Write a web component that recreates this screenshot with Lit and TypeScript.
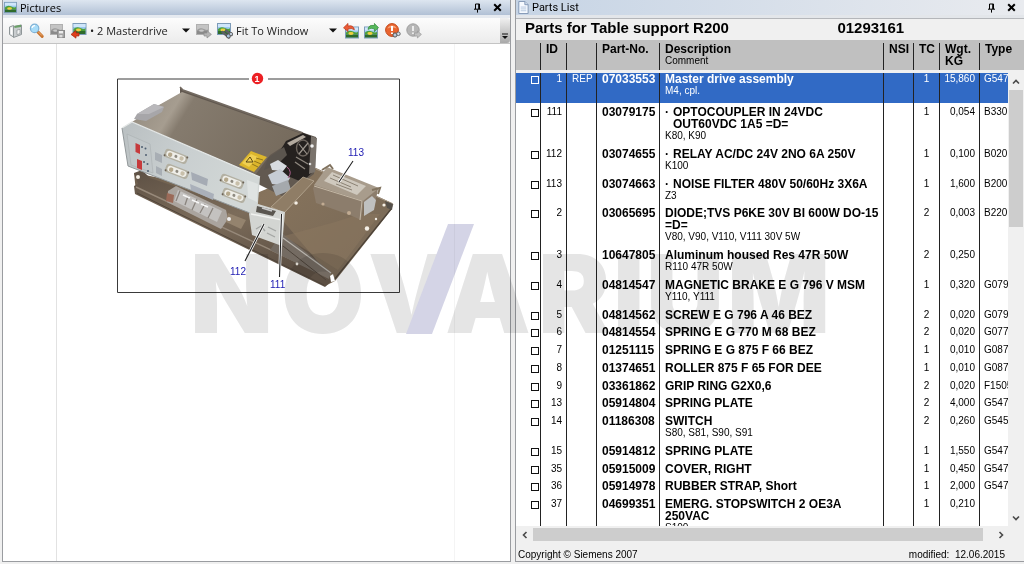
import { LitElement, html, css, svg, nothing } from "lit";
import { customElement, state } from "lit/decorators.js";
import { classMap } from "lit/directives/class-map.js";

interface Part {
  id: string;
  no: string;
  lines: string[];
  sub?: boolean;
  comment?: string;
  rep?: string;
  tc: string;
  kg: string;
  type: string;
}

const PARTS: Part[] = [
  { id: "1", rep: "REP", no: "07033553", lines: ["Master drive assembly"], comment: "M4, cpl.", tc: "1", kg: "15,860", type: "G547" },
  { id: "111", no: "03079175", sub: true, lines: ["OPTOCOUPLER IN 24VDC", "OUT60VDC 1A5 =D="], comment: "K80, K90", tc: "1", kg: "0,054", type: "B330" },
  { id: "112", no: "03074655", sub: true, lines: ["RELAY AC/DC 24V 2NO 6A 250V"], comment: "K100", tc: "1", kg: "0,100", type: "B020" },
  { id: "113", no: "03074663", sub: true, lines: ["NOISE FILTER 480V 50/60Hz 3X6A"], comment: "Z3", tc: "1", kg: "1,600", type: "B200" },
  { id: "2", no: "03065695", lines: ["DIODE;TVS P6KE 30V BI 600W DO-15", "=D="], comment: "V80, V90, V110, V111 30V 5W", tc: "2", kg: "0,003", type: "B220" },
  { id: "3", no: "10647805", lines: ["Aluminum housed Res 47R 50W"], comment: "R110 47R 50W", tc: "2", kg: "0,250", type: "" },
  { id: "4", no: "04814547", lines: ["MAGNETIC BRAKE E G 796 V MSM"], comment: "Y110, Y111", tc: "1", kg: "0,320", type: "G079" },
  { id: "5", no: "04814562", lines: ["SCREW E G 796 A 46 BEZ"], tc: "2", kg: "0,020", type: "G079" },
  { id: "6", no: "04814554", lines: ["SPRING E G 770 M 68 BEZ"], tc: "2", kg: "0,020", type: "G077" },
  { id: "7", no: "01251115", lines: ["SPRING E G 875 F 66 BEZ"], tc: "1", kg: "0,010", type: "G087" },
  { id: "8", no: "01374651", lines: ["ROLLER 875 F 65 FOR DEE"], tc: "1", kg: "0,010", type: "G087" },
  { id: "9", no: "03361862", lines: ["GRIP RING G2X0,6"], tc: "2", kg: "0,020", type: "F1505" },
  { id: "13", no: "05914804", lines: ["SPRING PLATE"], tc: "2", kg: "4,000", type: "G547" },
  { id: "14", no: "01186308", lines: ["SWITCH"], comment: "S80, S81, S90, S91", tc: "2", kg: "0,260", type: "G545" },
  { id: "15", no: "05914812", lines: ["SPRING PLATE"], tc: "1", kg: "1,550", type: "G547" },
  { id: "35", no: "05915009", lines: ["COVER, RIGHT"], tc: "1", kg: "0,450", type: "G547" },
  { id: "36", no: "05914978", lines: ["RUBBER STRAP, Short"], tc: "1", kg: "2,000", type: "G547" },
  { id: "37", no: "04699351", lines: ["EMERG. STOPSWITCH 2 OE3A", "250VAC"], comment: "S100", tc: "1", kg: "0,210", type: "" },
];

const pictureGlyph = svg`
  <rect x="0.5" y="1.5" width="13" height="11" fill="#9cc9f0" stroke="#7d9bb8"/>
  <rect x="1" y="2" width="12" height="3" fill="#cfe6fa"/>
  <path d="M1 7 Q4 4 8 6 T13 6 V9 H1Z" fill="#4da03c"/>
  <path d="M1 9 H13 V12 H1Z" fill="#2e6b2a"/>
  <ellipse cx="6" cy="8" rx="2.6" ry="1.4" fill="#f0d040"/>`;

const greyPicture = svg`
  <rect x="0.5" y="1.5" width="12" height="10" fill="#c4c4c4" stroke="#b0b0b0"/>
  <path d="M1 7 Q4 4 8 6 T12 6 V8 H1Z" fill="#9a9a9a"/>
  <path d="M1 8 H12 V11 H1Z" fill="#8a8a8a"/>
  <ellipse cx="5.5" cy="7.6" rx="2.4" ry="1.2" fill="#c9c9c9"/>`;

const ICONS = {
  book: svg`
    <path d="M1.5 4 L5.5 2.5 V14 L1.5 11.5Z" fill="#e9ebec" stroke="#8f9698"/>
    <path d="M5.5 3.5 L13.5 2 V11.5 L5.5 14.5Z" fill="#c9cdcf" stroke="#8f9698"/>
    <path d="M6.5 3 L13 1.8 V4 L6.5 5Z" fill="#6aa067"/>
    <path d="M9 7 L12 6.4 V10.6 L9 11.6Z" fill="#f3f4f4" stroke="#858b8d" stroke-width="0.6"/>
    <path d="M3 5 L4.2 4.5 V11.6 L3 11Z" fill="#fff"/>`,
  lens: svg`
    <path d="M8.6 8.6 L13.2 13.4" stroke="#c8742f" stroke-width="3" stroke-linecap="round"/>
    <path d="M9 8.6 L13 12.6" stroke="#f2b277" stroke-width="1"/>
    <circle cx="5.6" cy="5.4" r="4.2" fill="#a8dcf8" stroke="#7fb2d6" stroke-width="1.2"/>
    <path d="M3 5 A3 3 0 0 1 6 2.6" stroke="#fff" stroke-width="1.2" fill="none"/>`,
  saveOff: svg`${greyPicture}
    <rect x="7.5" y="7.5" width="7" height="7" fill="#a4a4a4" stroke="#8c8c8c"/>
    <rect x="9" y="8" width="4" height="2.4" fill="#ececec"/>
    <rect x="9.4" y="12" width="3" height="2.4" fill="#ddd"/>`,
  back: svg`<g transform="translate(1.5 -1)">${pictureGlyph}</g>
    <path d="M0 11.4 L5 7.6 V10 H8 V13 H5 V15.2Z" fill="#e0401c" stroke="#a82a10" stroke-width="0.7"/>`,
  forwardOff: svg`${greyPicture}
    <path d="M15.4 11.4 L11 7.8 V10 H8 V13 H11 V15Z" fill="#b4b4b4" stroke="#8e8e8e" stroke-width="0.7"/>`,
  find: svg`<g transform="translate(0 -1)">${pictureGlyph}</g>
    <path d="M5.5 9 L12 14.5 M9 7.5 L14.5 12" stroke="#5b5f64" stroke-width="2.4" stroke-linecap="round"/>
    <circle cx="11.4" cy="13" r="2" fill="#a8c4e0" stroke="#555"/>
    <circle cx="14" cy="11" r="1.6" fill="#c9d8e8" stroke="#666"/>`,
  undo: svg`<g transform="translate(2 2.5)">${pictureGlyph}</g>
    <path d="M0.5 4.8 L5 0.4 V3 Q10.6 1.6 11.4 6.8 Q8.6 4.6 5 6 V8.6Z" fill="#ea5a36" stroke="#b83818" stroke-width="0.7"/>`,
  redo: svg`<g transform="translate(0 2.5)">${pictureGlyph}</g>
    <path d="M14.5 4.8 L10.4 0.4 V2.6 Q4.6 1.4 4 6.4 Q7 4.4 10.4 5.8 V8.6Z" fill="#56b85a" stroke="#2f8a36" stroke-width="0.7"/>`,
  alertFind: svg`
    <circle cx="7" cy="7" r="6.4" fill="#e9642f" stroke="#c24a1c"/>
    <path d="M2.4 5.6 A5 5 0 0 1 11.6 5.6 Q7 3.6 2.4 5.6Z" fill="#f6a67c"/>
    <path d="M7 3 V8 M7 9.6 V11" stroke="#fff" stroke-width="2"/>
    <circle cx="10" cy="12" r="2.1" fill="#b9c9da" stroke="#555"/>
    <circle cx="13.4" cy="10.8" r="1.8" fill="#d4dee8" stroke="#666"/>`,
  alertOff: svg`
    <circle cx="7" cy="7" r="6.2" fill="#b6b6b6" stroke="#a0a0a0"/>
    <path d="M7 3 V8 M7 9.6 V11" stroke="#ececec" stroke-width="2"/>
    <path d="M15.4 11.4 L11.4 8 V10 H8.4 V13 H11.4 V15Z" fill="#c2c2c2" stroke="#999" stroke-width="0.7"/>`,
};

const caret = html`<svg class="caret" viewBox="0 0 8 5" width="8" height="5"><path d="M0 0.5 H8 L4 4.5Z" fill="#111"/></svg>`;

const chevron = (d: string) =>
  html`<svg viewBox="0 0 8 8" width="8" height="8"><path d=${d} fill="none" stroke="#4a4a4a" stroke-width="1.6"/></svg>`;

const panelTools = html`
  <button class="tool" aria-label="Auto hide">
    <svg viewBox="0 0 9 10" width="9" height="10">
      <path d="M2.5 6 V1 H6.5 V6 M1 6.2 H8 M4.5 6.5 V9.6" fill="none" stroke="#000"/><path d="M5.7 1 V6" stroke="#000"/>
    </svg>
  </button>
  <button class="tool" aria-label="Close">
    <svg viewBox="0 0 9 9" width="9" height="9"><path d="M1.2 1.2 L7.8 7.8 M7.8 1.2 L1.2 7.8" stroke="#000" stroke-width="2"/></svg>
  </button>`;

@customElement("assembly-drawing")
export class AssemblyDrawing extends LitElement {
  static styles = css`
    :host { display: block; }
    .drawing { display: block; width: 100%; height: auto; }
    .mark { font: 10px "Liberation Sans", sans-serif; fill: #2320b4; }
    .badge { font: bold 9px "Liberation Sans", sans-serif; fill: #fff; }
  `;

  render() {
    return html`<svg class="drawing" viewBox="116 72 285 222" role="img" aria-label="Master drive assembly">
      <defs>
        <linearGradient id="lid" x1="0" y1="0" x2="1" y2="0.3">
          <stop offset="0" stop-color="#8f877b"/><stop offset="0.28" stop-color="#a69d90"/>
          <stop offset="0.36" stop-color="#857b6e"/><stop offset="1" stop-color="#776c5e"/>
        </linearGradient>
        <linearGradient id="front" x1="0" y1="0" x2="1" y2="0.4">
          <stop offset="0" stop-color="#b9bfc1"/><stop offset="0.5" stop-color="#c9cfd0"/><stop offset="1" stop-color="#d2d7d6"/>
        </linearGradient>
        <linearGradient id="plate" x1="0" y1="0" x2="1" y2="0.5">
          <stop offset="0" stop-color="#6c5d4c"/><stop offset="0.5" stop-color="#86735c"/><stop offset="1" stop-color="#7a6a57"/>
        </linearGradient>
        <linearGradient id="rail" x1="0" y1="0" x2="0.4" y2="1">
          <stop offset="0" stop-color="#5d5044"/><stop offset="0.5" stop-color="#7c6c5a"/><stop offset="1" stop-color="#5c4f43"/>
        </linearGradient>
      </defs>

      <path d="M249 79 H117.5 V292.5 H399.5 V79 H268" fill="none" stroke="#3a3a3a"/>

      <path d="M134 173 L150 176 L250 196 L316 168 L392 203 L392 209 L335 281 L325 286 L136 192Z" fill="url(#plate)"/>
      <path d="M134 173 L142 170 L150 178 L258 214 L284 222 L330 276 L334 279 L325 287 L135 194 L134 186 L138 184Z" fill="url(#rail)"/>
      <path d="M136 187 L329 277" stroke="#97897a" stroke-width="1.4"/>
      <path d="M282 233 L331 272 L329 279 L270 250Z" fill="#746b62"/>
      <path d="M283 238 L331 273" stroke="#b9b5ae" stroke-width="1.2"/>
      <path d="M283 246 L326 280" stroke="#4d433a"/>
      <path d="M137 193 L324 285" stroke="#4f443a"/>
      <path d="M334 280 L391 209" stroke="#4c4238" stroke-width="1.2"/>
      <path d="M330 276 L333 274 L335 281 L331 282Z" fill="#fff"/>
      <path d="M316 169 L393 204 L391 209" fill="none" stroke="#a89a88"/>
      <path d="M284 236 L335 222 L360 214 L380 214 L338 270Z" fill="#8b7860" opacity="0.5"/>
      <g fill="#f4efe6"><circle cx="367" cy="228.500" r="2.2"/><circle cx="296" cy="203" r="1.8"/><circle cx="376" cy="219" r="1.2"/><circle cx="384" cy="205" r="1.6"/><circle cx="138" cy="177" r="2"/><circle cx="297" cy="264" r="1.4"/></g>
      <path d="M385 201 L393 204 L392 210 L387 208Z" fill="#55504a"/>

      <path d="M168 191 L176 186 L226 210 L228 219 L221 229 L167 202Z" fill="#aaa49e"/>
      <path d="M167 193 L174 195 L173 203 L166 201Z" fill="#9b6a58"/>
      <path d="M178 190 L222 211 L217 222 L174 201Z" fill="#c4c2c0"/>
      <path d="M180 191 L176 201 M188 196 L185 205 M197 199 L192 210 M205 204 L200 213 M213 208 L208 218" stroke="#8a847e" stroke-width="1.3"/>
      <path d="M183 195 L190 198 M192 200 L199 203 M201 204 L208 207" stroke="#f6f6f6" stroke-width="1.6"/>
      <path d="M228 213 L246 220 L241 229 L226 222Z" fill="#94836e"/>
      <circle cx="229" cy="219" r="2" fill="#eee"/>

      <path d="M180 87 L183 90 L304 133 L316 137 L314 174 L284 197 L254 182 L132 123 L151 110 L180 94Z" fill="#625950"/>
      <path d="M182 92 L302 134 L270 155 L256 174 L132 122 L152 109Z" fill="url(#lid)"/>
      <path d="M180 87 L183 90 L303 133" fill="none" stroke="#746b62" stroke-width="1.6"/>
      <path d="M134 119 L137 114 L154 104 L164 107 L162 112 L146 121Z" fill="#a7a6a9"/>
      <path d="M137 114 L154 104 L164 107 L149 114Z" fill="#b9b8bb"/>

      <path d="M286 141 L303 133 L316 138 L315 170 L302 182 L278 172 L277 156Z" fill="#25211f"/>
      <path d="M287 143 L303 135 L306 137 L290 146Z" fill="#b3aa9f"/>
      <path d="M311 136 L317 138 L315 172 L309 174Z" fill="#7a736c"/>
      <ellipse cx="303" cy="148" rx="6.500" ry="8" fill="none" stroke="#6d655e" stroke-width="1.4"/>
      <path d="M299 144 L307 154 M308 143 L299 154" stroke="#9c958d" stroke-width="1.2"/>
      <path d="M296 157 L308 164 M295 162 L305 169" stroke="#8e877f" stroke-width="1.4"/>
      <circle cx="312" cy="146" r="1.8" fill="#f1f1f1"/><circle cx="310" cy="164" r="1.300" fill="#ddd"/>
      <path d="M268 158 L284 147 L287 155 L278 164 L264 170Z" fill="#5b554e"/>
      <path d="M270 164 L278 160 L287 166 L283 171 L272 170Z" fill="#d7dbe0"/>
      <path d="M268 175 L280 169 L290 178 L285 186 L272 184Z" fill="#c6ccd4"/>
      <path d="M272 186 L288 180 L291 190 L276 196Z" fill="#a5a9ad"/>
      <path d="M287 167 Q293 172 288 178" fill="none" stroke="#b06090"/>

      <path d="M122 128 L132 122 L260 177 L257 215 L250 213 L128 166Z" fill="url(#front)"/>
      <path d="M122 128 L132 122 L260 177" fill="none" stroke="#e4e7e6" stroke-width="1.300"/>
      <path d="M122 128 L128 166 L250 213" fill="none" stroke="#92989a"/>
      <path d="M127 134 L150 144 L153 173 L131 165Z" fill="#c1c7c9" stroke="#adb3b5" stroke-width="0.7"/>
      <path d="M135.500 143 L140 145 V154 L135.500 152Z" fill="#c63a3c"/>
      <path d="M137 159 L142 161 V170 L137 168Z" fill="#c63a3c"/>
      <g fill="#4f5f70"><circle cx="142" cy="147" r="1"/><circle cx="145.500" cy="148.500" r="1"/><circle cx="146" cy="155" r="1"/><circle cx="144" cy="162" r="1"/><circle cx="147.500" cy="164" r="1"/><circle cx="148" cy="171" r="1"/></g>
      <path d="M155 152 L162 155 V163 L155 160Z M156 166 L162 169 V176 L156 173Z" fill="#a8aeb4"/>
      ${[[175, 156], [176, 171], [231, 181], [233, 195]].map(
        ([x, y]) => svg`<g transform=${`translate(${x} ${y}) rotate(21)`}>
          <rect x="-11" y="-4.500" width="24" height="9" rx="3" fill="#b3b0a2"/>
          <rect x="-9" y="-3" width="20" height="6" rx="3" fill="#efeee8"/>
          <circle cx="-5" cy="0.500" r="2.200" fill="#b5a88c"/><circle cx="1" cy="0" r="1.500" fill="#8e8a80"/><circle cx="7" cy="0" r="2.200" fill="#c8bfaa"/>
          <circle cx="-10" cy="3" r="1" fill="#6a6054"/><circle cx="12" cy="-3" r="1" fill="#6a6054"/>
        </g>`
      )}
      <path d="M191 172 L208 179 L207 186 L192 180Z" fill="#a5abb4"/>
      <path d="M190 184 L214 194 L213 200 L191 190Z" fill="#aab0ba"/>
      <path d="M247 180 L258 184 L257 202 L248 198Z" fill="#dfe3e2"/>
      <path d="M239 165 L251 151 L267 157 L254 172Z" fill="#dcb62c"/>
      <path d="M242 163 L251 154 L258 157 L249 167Z" fill="#efcf52"/>
      <path d="M246 162 L250 157 L253 162Z" fill="none" stroke="#4b3a10" stroke-width="0.9"/>
      <path d="M256 158 L263 160 M254 161 L261 164 M252 164 L258 167" stroke="#7c6518" stroke-width="0.8"/>

      <path d="M271 207 L303 177 L314 181 L284 213Z" fill="#8f7d66" stroke="#b8a994" stroke-width="0.8"/>
      <path d="M251 208 L258 204 L285 212 L282 246 L252 235 L249 214Z" fill="#d3d5d2"/>
      <path d="M257 206 L276 211 L273 216 L256 212Z" fill="#5a5650"/>
      <path d="M262 208 L272 211" stroke="#c9c9c9" stroke-width="1.6"/>
      <path d="M251 214 L282 220" stroke="#f1f2f0" stroke-width="1.4"/>
      <path d="M256 229 L261 226 L265 231 M268 227 L276 231 M267 233 L275 237" stroke="#a3a5a3" stroke-width="1.3" fill="none"/>

      <path d="M313 188 L327 168 L378 189 L376 199 L364 202 L361 220 L350 215 L316 203Z" fill="#8c7d6c"/>
      <path d="M314 185 L327 167 L379 188 L363 201Z" fill="#a89c8c"/>
      <path d="M324 181 L332 172 L366 186 L357 195Z" fill="#cfc9be"/>
      <path d="M330 178 L351 187 M333 175 L358 186 M336 184 L352 190" stroke="#8b8274" stroke-width="1"/>
      <path d="M314 186 L362 201 L360 220" fill="none" stroke="#c4b8a6" stroke-width="1"/>
      <path d="M364 202 L372 196 L376 200 L374 210 L364 216Z" fill="#bfc0bf"/>
      <path d="M322 170 L330 165 L333 169 M372 190 L380 188 L378 194" fill="none" stroke="#81735f" stroke-width="2"/>
      <circle cx="349" cy="213" r="2" fill="#c1ab92"/><circle cx="323" cy="204" r="1.600" fill="#c1ab92"/>

      <path d="M353 161 L339 182 M245 261 L264 224 M279.500 277 L281.500 214" stroke="#fff" stroke-width="2.6"/>
      <path d="M353 161 L339 182 M245 261 L264 224 M279.500 277 L281.500 214" stroke="#222" stroke-width="1.1"/>
      <text class="mark" x="348" y="156">113</text>
      <text class="mark" x="230" y="275">112</text>
      <text class="mark" x="270" y="288">111</text>
      <circle cx="257.500" cy="78.500" r="5.700" fill="#ec2024"/>
      <text class="badge" x="257" y="82" text-anchor="middle">1</text>
    </svg>`;
  }
}

@customElement("app-root")
export class AppRoot extends LitElement {
  @state() private selected = "1";

  static styles = css`
    :host {
      display: block;
      position: relative;
      height: 100vh;
      overflow: hidden;
      background: #f0f0f0;
      color: #000;
      font: 10px/12px "Liberation Sans", sans-serif;
    }
    * { box-sizing: border-box; }
    button { display: grid; place-items: center; padding: 0; border: 0; background: none; }
    .window { display: grid; grid-template-columns: 1fr 1fr; height: 100%; gap: 4px; padding: 0 0 2px 2px; }
    .panel { display: flex; flex-direction: column; min-width: 0; min-height: 0; border: solid #9a9ca0; border-width: 0 1px 1px; }
    .parts { border-right-width: 0; }

    .bar {
      display: flex; align-items: center; gap: 3px; flex: none; height: 15px; padding: 0 4px 0 1px;
      background: linear-gradient(#dde6f0, #b1c0d5);
    }
    .parts .bar { background: linear-gradient(90deg, #c6d4e5, #e9ebef); }
    .caption { flex: 1; margin: 0; font: 11px/14px "Open Sans", "Noto Sans", sans-serif; }
    .parts .caption { font: 11px/14px Roboto, sans-serif; }
    .tool { width: 17px; height: 14px; }

    .toolbar {
      display: flex; align-items: center; flex: none; height: 29px; padding-left: 3px;
      border-top: 3px solid #e6eaf0; border-bottom: 1px solid #c4c4c4;
      background: linear-gradient(#fcfcfc, #ececec);
    }
    .icon { width: 20px; height: 20px; margin-right: 1px; }
    .combo { display: flex; align-items: center; margin-right: 2px; }
    .combo.picture { width: 102px; }
    .combo.zoom { width: 103px; }
    .combo select {
      flex: 1; min-width: 0; appearance: none; border: 0; padding: 0; background: none; color: #222;
      font: 11px/16px "Open Sans", "Noto Sans", sans-serif;
    }
    .combo .caret { flex: none; margin-right: 2px; }
    .more {
      width: 10px; height: 25px; margin-left: auto; align-items: end; padding-bottom: 3px;
      background: linear-gradient(#f0f0f0, #a9a9a9); border-radius: 0 3px 3px 0;
    }

    .canvas { flex: 1; min-height: 0; padding: 0 55px 0 53px; background: #fff; }
    .sheet { height: 100%; padding: 28px 53px 0 59px; border: solid #e2e2e2; border-width: 0 1px; border-right-color: #f4f4f4; }

    .heading { display: flex; flex: none; height: 25px; padding: 2px 0 0 9px; border-top: 3px solid #e3e6ea; box-shadow: inset 0 1px #b4b6ba; }
    .heading h1, .heading p { margin: 0; font: bold 15px/16px "Liberation Sans", sans-serif; }
    .heading h1 { flex: 313; }
    .heading p { flex: 187; }

    .list { display: flex; flex: 1; min-height: 0; overflow: hidden; background: #fff; }
    .rows { flex: 1; min-width: 0; }
    table { position: relative; z-index: 1; width: 100%; table-layout: fixed; border-collapse: separate; border-spacing: 0; }
    .c-tick { width: 25px; } .c-id { width: 26px; } .c-rep { width: 30px; } .c-no { width: 63px; }
    .c-nsi { width: 30px; } .c-tc { width: 26px; } .c-kg { width: 40px; } .c-type { width: 28px; }
    th, td { padding: 3px 5px; vertical-align: top; text-align: left; font-weight: normal; white-space: nowrap; }
    th {
      height: 33px; padding-bottom: 0; border-bottom: 3px solid #f0f0f0;
      background: linear-gradient(#222, #222) right bottom / 1px 27px no-repeat padding-box, #c0c0c0 padding-box;
    }
    th:last-child { background: #c0c0c0 padding-box; }
    td { border-right: 1px solid #222; overflow: hidden; }
    td:last-child { border-right: 0; padding: 3px 0 0 4px; }
    tr:nth-child(4n) td { padding-bottom: 2px; }
    .selected td, .selected td:last-child { padding-top: 0; padding-bottom: 6px; background: #316ac5; color: #fff; }
    .strong { display: block; font: bold 12px/12px "Liberation Sans", sans-serif; }
    .sub { padding-left: 8px; }
    .sub:first-child::before { content: "·"; display: inline-block; width: 8px; margin-left: -8px; }
    .end { text-align: right; }
    td.end { padding-right: 4px; padding-left: 0; }
    .mid { text-align: center; }
    .comment { display: block; }
    td.tick { padding-left: 15px; padding-right: 0; }
    .tick input { display: block; appearance: none; width: 8px; height: 8px; margin: 3px 0 0; border: 1px solid #111; background: #fff; }
    .selected .tick input { border-color: #fff; background: none; }

    .scroll-y { display: flex; flex-direction: column; flex: none; width: 16px; background: #f0f0f0; }
    .corner { flex: none; height: 30px; background: #c0c0c0; }
    .track-y { display: grid; grid-template-rows: 17px 137px 1fr 16px; flex: 1; justify-items: center; padding-top: 3px; }
    .thumb { background: #cdcdcd; }
    .track-y .thumb { width: 14px; }
    .scroll-x { display: grid; grid-template-columns: 17px 1fr 36px; flex: none; height: 16px; padding: 2px 5px 1px 0; }
    .status { display: flex; justify-content: space-between; flex: none; height: 19px; padding: 7px 19px 0 2px; }

    .watermark { position: absolute; left: 0; top: 0; width: 100%; height: 100%; pointer-events: none; mix-blend-mode: multiply; z-index: 2; }
    .brand { font: 900 108px Inter, "Open Sans", sans-serif; fill: #e5e5e5; }
  `;

  private icon(name: keyof typeof ICONS, label: string) {
    return html`<button class="icon" aria-label=${label}>
      <svg viewBox="0 0 16 16" width="16" height="16">${ICONS[name]}</svg>
    </button>`;
  }

  private row(p: Part) {
    return html`<tr class=${classMap({ selected: p.id === this.selected })} @click=${() => (this.selected = p.id)}>
      <td class="tick"><input type="checkbox" aria-label=${`Select part ${p.no}`} /></td>
      <td class="end">${p.id}</td>
      <td class="mid">${p.rep ?? nothing}</td>
      <td><span class="strong">${p.no}</span></td>
      <td>
        ${p.lines.map((l) => html`<span class=${classMap({ strong: true, sub: !!p.sub })}>${l}</span>`)}
        ${p.comment ? html`<span class="comment">${p.comment}</span>` : nothing}
      </td>
      <td></td>
      <td class="mid">${p.tc}</td>
      <td class="end">${p.kg}</td>
      <td>${p.type}</td>
    </tr>`;
  }

  render() {
    return html`
      <main class="window">
        <section class="panel">
          <header class="bar">
            <svg viewBox="0 0 14 14" width="13" height="13">${pictureGlyph}</svg>
            <h2 class="caption">Pictures</h2>
            ${panelTools}
          </header>
          <div class="toolbar">
            ${this.icon("book", "Catalog")} ${this.icon("lens", "Zoom")} ${this.icon("saveOff", "Save picture")}
            ${this.icon("back", "Previous picture")}
            <label class="combo picture">
              <select aria-label="Picture"><option>• 2 Masterdrive</option></select>${caret}
            </label>
            ${this.icon("forwardOff", "Next picture")} ${this.icon("find", "Find in picture")}
            <label class="combo zoom">
              <select aria-label="Zoom"><option>Fit To Window</option></select>${caret}
            </label>
            ${this.icon("undo", "Rotate left")} ${this.icon("redo", "Rotate right")}
            ${this.icon("alertFind", "Find hotspot")} ${this.icon("alertOff", "Next hotspot")}
            <button class="more" aria-label="More tools">
              <svg viewBox="0 0 6 7" width="6" height="7"><path d="M0 1 H6" stroke="#111"/><path d="M0 3 H6 L3 6Z" fill="#111"/></svg>
            </button>
          </div>
          <div class="canvas"><div class="sheet"><assembly-drawing></assembly-drawing></div></div>
        </section>

        <section class="panel parts">
          <header class="bar">
            <svg viewBox="0 0 12 14" width="12" height="13">
              <path d="M1.500 0.500 H8 L11.500 4 V13.500 H1.500Z" fill="#f6faff" stroke="#7d93b2"/>
              <path d="M8 0.500 V4 H11.500" fill="#cfdcec" stroke="#7d93b2"/>
              <path d="M3.500 6.500 H9.500 M3.500 8.500 H9.500 M3.500 10.500 H9.500" stroke="#b4c6de"/>
            </svg>
            <h2 class="caption">Parts List</h2>
            ${panelTools}
          </header>
          <div class="heading"><h1>Parts for Table support R200</h1><p>01293161</p></div>
          <div class="list">
            <div class="rows">
              <table>
                <colgroup>
                  <col class="c-tick" /><col class="c-id" /><col class="c-rep" /><col class="c-no" /><col />
                  <col class="c-nsi" /><col class="c-tc" /><col class="c-kg" /><col class="c-type" />
                </colgroup>
                <thead>
                  <tr>
                    <th></th>
                    <th><span class="strong">ID</span></th>
                    <th></th>
                    <th><span class="strong">Part-No.</span></th>
                    <th><span class="strong">Description</span><span class="comment">Comment</span></th>
                    <th><span class="strong">NSI</span></th>
                    <th><span class="strong">TC</span></th>
                    <th><span class="strong">Wgt.</span><span class="strong">KG</span></th>
                    <th><span class="strong">Type</span></th>
                  </tr>
                </thead>
                <tbody>${PARTS.map((p) => this.row(p))}</tbody>
              </table>
            </div>
            <div class="scroll-y">
              <div class="corner"></div>
              <div class="track-y">
                <button aria-label="Scroll up">${chevron("M1 5.500 L4 2.500 L7 5.500")}</button>
                <div class="thumb"></div>
                <span></span>
                <button aria-label="Scroll down">${chevron("M1 2.500 L4 5.500 L7 2.500")}</button>
              </div>
            </div>
          </div>
          <div class="scroll-x">
            <button aria-label="Scroll left">${chevron("M5.500 1 L2.500 4 L5.500 7")}</button>
            <div class="thumb"></div>
            <button aria-label="Scroll right">${chevron("M2.500 1 L5.500 4 L2.500 7")}</button>
          </div>
          <footer class="status"><span>Copyright © Siemens 2007</span><span>modified:&nbsp; 12.06.2015</span></footer>
        </section>
      </main>
      <svg class="watermark" viewBox="0 0 1024 564" aria-hidden="true">
        <text class="brand" x="190 281 368 445 538 613 646 727" y="333">NOVARIUM</text>
        <path d="M406 334 L448 224 H474 L432 334Z" fill="#d4d4e6"/>
      </svg>
    `;
  }
}
